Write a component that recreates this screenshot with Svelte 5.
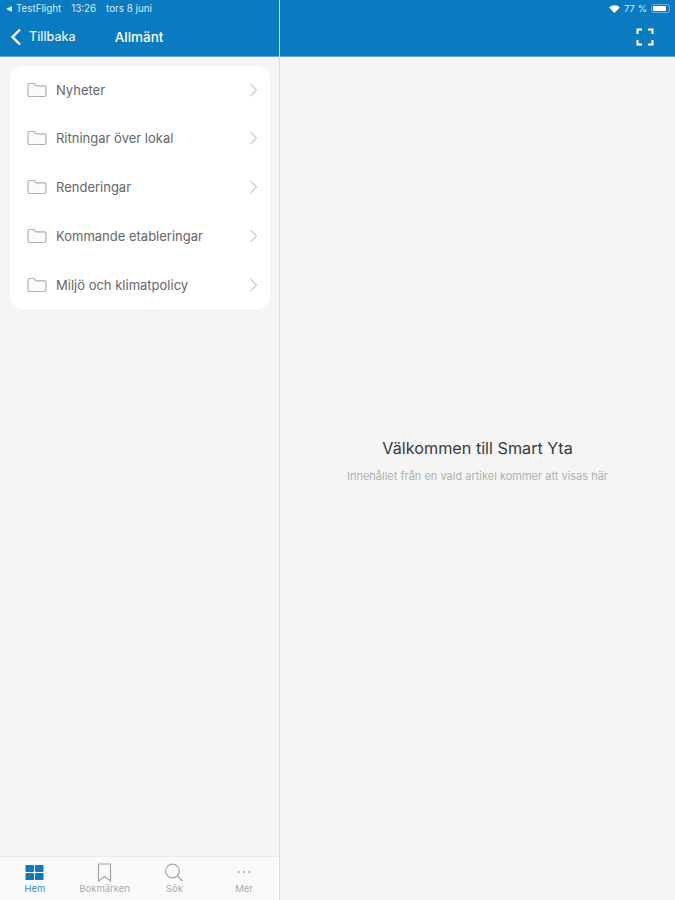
<script>
	const folders = ['Nyheter', 'Ritningar över lokal', 'Renderingar', 'Kommande etableringar', 'Miljö och klimatpolicy'];
</script>

<div class="app">
	<aside class="side">
		<header class="bar">
			<div class="status">
				<span class="back-tri"></span>
				<span>TestFlight</span>
				<span class="time">13:26</span>
				<span class="date">tors 8 juni</span>
			</div>
			<div class="nav">
				<svg class="back" width="12" height="18" viewBox="0 0 12 18"><path d="M10 1.5 2.5 9 10 16.500" fill="none" stroke="#fff" stroke-width="2.400" /></svg>
				<span class="back-label">Tillbaka</span>
				<span class="title">Allmänt</span>
			</div>
		</header>

		<main class="list-wrap">
			<ul class="list">
				{#each folders as name}
					<li>
						<svg class="folder" width="20" height="16" viewBox="0 0 20 16"><path d="M1 13V3c0-1 .6-1.500 1.500-1.500h4.500L9 3.800h8.500c1 0 1.500.6 1.500 1.500V13c0 1-.6 1.500-1.500 1.500h-15C1.600 14.500 1 14 1 13Z" fill="#fafafa" stroke="#b0b0b0" stroke-width="1.200" /></svg>
						<span class="name">{name}</span>
						<svg class="chev" width="9" height="14" viewBox="0 0 9 14"><path d="M1.500 1 7.500 7l-6 6" fill="none" stroke="#cfcfcf" stroke-width="1.300" /></svg>
					</li>
				{/each}
			</ul>
		</main>

		<nav class="tabs">
			<div class="tab active">
				<span class="icon"><svg width="19" height="17" viewBox="0 0 20 17"><g fill="#0a7bc0"><rect x="0.500" y="0.500" width="9" height="7.500" rx="1" /><rect x="10.500" y="0.500" width="9" height="7.500" rx="1" /><rect x="0.500" y="9" width="9" height="7.500" rx="1" /><rect x="10.500" y="9" width="9" height="7.500" rx="1" /></g></svg></span>
				<span>Hem</span>
			</div>
			<div class="tab">
				<span class="icon"><svg width="15" height="19" viewBox="0 0 15 19"><path d="M1.500 1h12v17l-6-4.500-6 4.500Z" fill="none" stroke="#a5a5a5" stroke-width="1.200" /></svg></span>
				<span>Bokmärken</span>
			</div>
			<div class="tab">
				<span class="icon"><svg width="20" height="19" viewBox="0 0 20 19"><circle cx="8.500" cy="8" r="6.800" fill="none" stroke="#a5a5a5" stroke-width="1.200" /><path d="m13.500 13 5 5" stroke="#a5a5a5" stroke-width="1.300" /></svg></span>
				<span>Sök</span>
			</div>
			<div class="tab">
				<span class="icon"><svg width="20" height="19" viewBox="0 0 20 19"><g fill="#adadad"><circle cx="4.500" cy="9" r="1.100" /><circle cx="10" cy="9" r="1.100" /><circle cx="15.500" cy="9" r="1.100" /></g></svg></span>
				<span>Mer</span>
			</div>
		</nav>
	</aside>

	<section class="detail">
		<header class="bar">
			<div class="status right">
				<svg width="11" height="8" viewBox="0 0 12 9"><path d="M6 9 0 2.800C3.500-.6 8.500-.6 12 2.800Z" fill="#fff" /></svg>
				<span class="pct">77 %</span>
				<span class="battery"><span class="level"></span></span>
			</div>
			<div class="nav end">
				<svg width="18" height="18" viewBox="0 0 18 18"><path d="M1.500 6V1.500H6M12 1.500h4.500V6M16.500 12v4.500H12M6 16.500H1.500V12" fill="none" stroke="#fff" stroke-width="2" /></svg>
			</div>
		</header>
		<div class="welcome">
			<h1>Välkommen till Smart Yta</h1>
			<p>Innehållet från en vald artikel kommer att visas här</p>
		</div>
	</section>
</div>

<style>
	:global(body) {
		margin: 0;
		background: #f5f5f5;
	}

	.app {
		display: flex;
		width: 675px;
		height: 900px;
		overflow: hidden;
		font-family: Inter, "Liberation Sans", sans-serif;
		background: #f5f5f5;
	}

	.side {
		display: flex;
		flex-direction: column;
		width: 279px;
		flex-shrink: 0;
		border-right: 1px solid #dcdcdc;
	}

	.detail {
		display: flex;
		flex-direction: column;
		flex: 1;
		min-width: 0;
	}

	.bar {
		height: 57px;
		flex-shrink: 0;
		box-sizing: border-box;
		background: #0a7bc0;
		color: #fff;
		border-bottom: 1px solid #5ea6d6;
	}

	.status {
		display: flex;
		align-items: center;
		height: 17px;
		padding-left: 6px;
		font-size: 9.800px;
		color: #dcecf7;
	}

	.status.right {
		justify-content: flex-end;
		gap: 4px;
		padding: 0 5px 0 0;
	}

	.pct {
		font-size: 9.500px;
	}

	.back-tri {
		width: 0;
		height: 0;
		margin-right: 4px;
		border-style: solid;
		border-width: 3px 6px 3px 0;
		border-color: transparent #dcecf7 transparent transparent;
	}

	.time {
		margin-left: 10px;
	}

	.date {
		margin-left: 10px;
	}

	.battery {
		display: block;
		width: 19px;
		height: 9px;
		padding: 1px;
		box-sizing: border-box;
		border: 1px solid #6db0dd;
		border-radius: 3px;
	}

	.level {
		display: block;
		width: 85%;
		height: 100%;
		background: #fff;
		border-radius: 1px;
	}

	.nav {
		display: flex;
		align-items: center;
		height: 39px;
		box-sizing: border-box;
		font-size: 13px;
		font-weight: 500;
	}

	.nav.end {
		justify-content: flex-end;
		padding-right: 21px;
	}

	.back {
		margin-left: 10px;
	}

	.back-label {
		margin-left: 7px;
		font-size: 12.500px;
		color: #e6f1f9;
	}

	.title {
		margin-left: 39px;
		font-size: 13.500px;
	}

	.list-wrap {
		flex: 1;
		padding: 9px 9px 0 10px;
	}

	.list {
		margin: 0;
		padding: 0;
		list-style: none;
		background: #fff;
		border-radius: 13px;
	}

	.list li {
		display: flex;
		align-items: center;
		height: 49px;
		padding: 0 12px 0 17px;
		font-size: 13px;
		color: #666;
	}

	.list li:first-child {
		height: 47px;
	}

	.folder {
		margin-right: 9px;
	}

	.name {
		flex: 1;
	}

	.tabs {
		display: flex;
		height: 44px;
		flex-shrink: 0;
		box-sizing: border-box;
		background: #fafafa;
		border-top: 1px solid #ebebeb;
	}

	.tab {
		display: flex;
		flex-direction: column;
		align-items: center;
		flex: 1;
		padding-top: 5px;
		font-size: 9.500px;
		line-height: 11px;
		color: #aaa;
	}

	.icon {
		display: flex;
		align-items: center;
		height: 21px;
	}

	.tab.active {
		color: #3b8fcb;
	}

	.welcome {
		flex: 1;
		display: flex;
		flex-direction: column;
		align-items: center;
		padding-top: 381px;
		text-align: center;
	}

	h1 {
		margin: 0;
		font-size: 16.200px;
		line-height: 20px;
		font-weight: 400;
		color: #3a3a3a;
	}

	p {
		margin: 11px 0 0;
		font-size: 11px;
		line-height: 14px;
		color: #b0b0b0;
	}
</style>
